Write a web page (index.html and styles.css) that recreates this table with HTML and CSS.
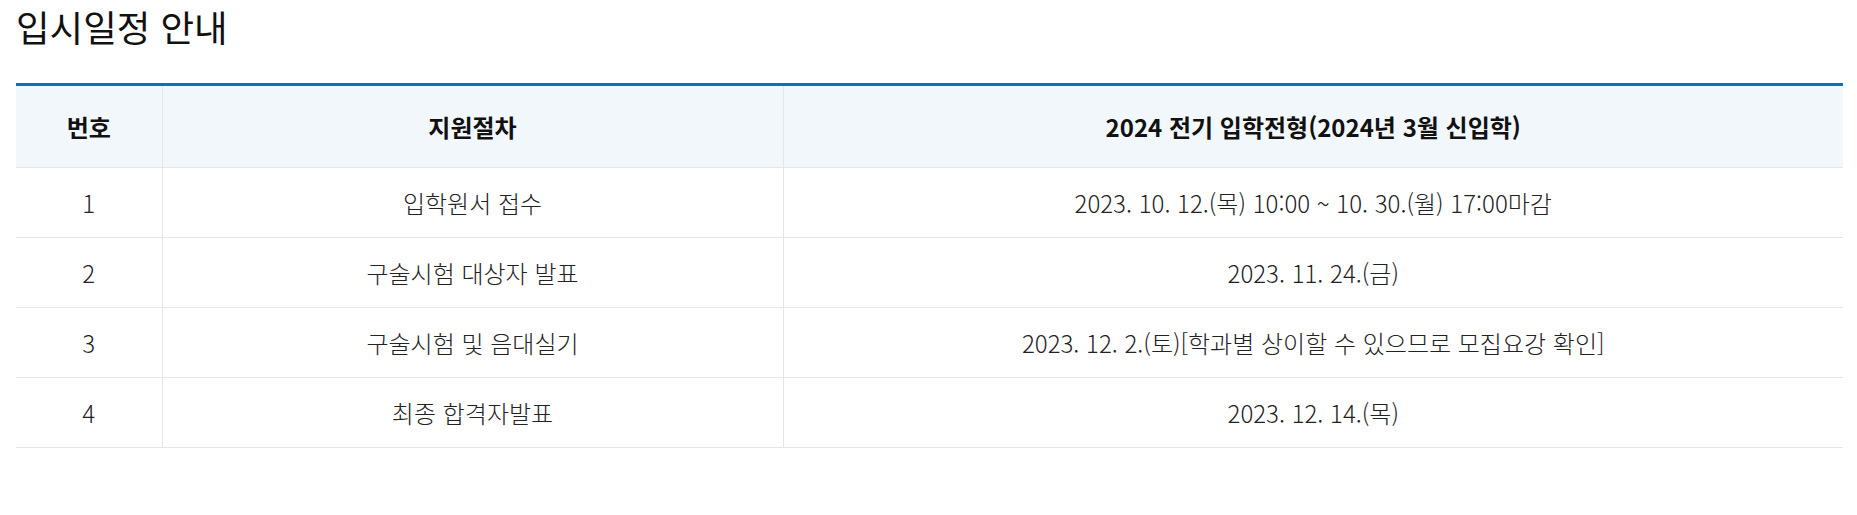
FILE: index.html
```html
<!DOCTYPE html>
<html lang="ko">
<head>
<meta charset="utf-8">
<title>입시일정 안내</title>
<link rel="stylesheet" href="styles.css">
</head>
<body>
<div class="page">
  <h2 class="title">입시일정 안내</h2>
  <table class="schedule">
    <colgroup>
      <col class="c-no">
      <col class="c-step">
      <col class="c-date">
    </colgroup>
    <thead>
      <tr>
        <th>번호</th>
        <th>지원절차</th>
        <th>2024 전기 입학전형(2024년 3월 신입학)</th>
      </tr>
    </thead>
    <tbody>
      <tr><td>1</td><td>입학원서 접수</td><td>2023. 10. 12.(목) 10:00 ~ 10. 30.(월) 17:00마감</td></tr>
      <tr><td>2</td><td>구술시험 대상자 발표</td><td>2023. 11. 24.(금)</td></tr>
      <tr><td>3</td><td>구술시험 및 음대실기</td><td>2023. 12. 2.(토)[학과별 상이할 수 있으므로 모집요강 확인]</td></tr>
      <tr><td>4</td><td>최종 합격자발표</td><td>2023. 12. 14.(목)</td></tr>
    </tbody>
  </table>
</div>
</body>
</html>
```

FILE: styles.css
```css
html, body {
  margin: 0;
  padding: 0;
  background: #fff;
}
body {
  font-family: "Noto Sans CJK KR", "Noto Sans", sans-serif;
  color: #222;
}
.page {
  padding: 0 14px 0 16px;
}
.title {
  margin: 0;
  padding-top: 5px;
  height: 78px;
  font-size: 36.5px;
  font-weight: 400;
  line-height: 44px;
  color: #111;
}
.schedule {
  width: 100%;
  border-collapse: collapse;
  border-top: 3px solid #0b70bd;
  table-layout: fixed;
}
.c-no { width: 146px; }
.c-step { width: 621px; }
.schedule th,
.schedule td {
  text-align: center;
  border-bottom: 1px solid #e6e6e6;
  border-left: 1px solid #e6e6e6;
  padding: 0;
}
.schedule th:first-child,
.schedule td:first-child {
  border-left: none;
}
.schedule th {
  height: 81px;
  background: #f2f7fb;
  font-size: 24px;
  font-weight: 700;
  color: #111;
}
.schedule td {
  height: 69px;
  font-size: 24px;
  font-weight: 300;
  color: #222;
}
```
